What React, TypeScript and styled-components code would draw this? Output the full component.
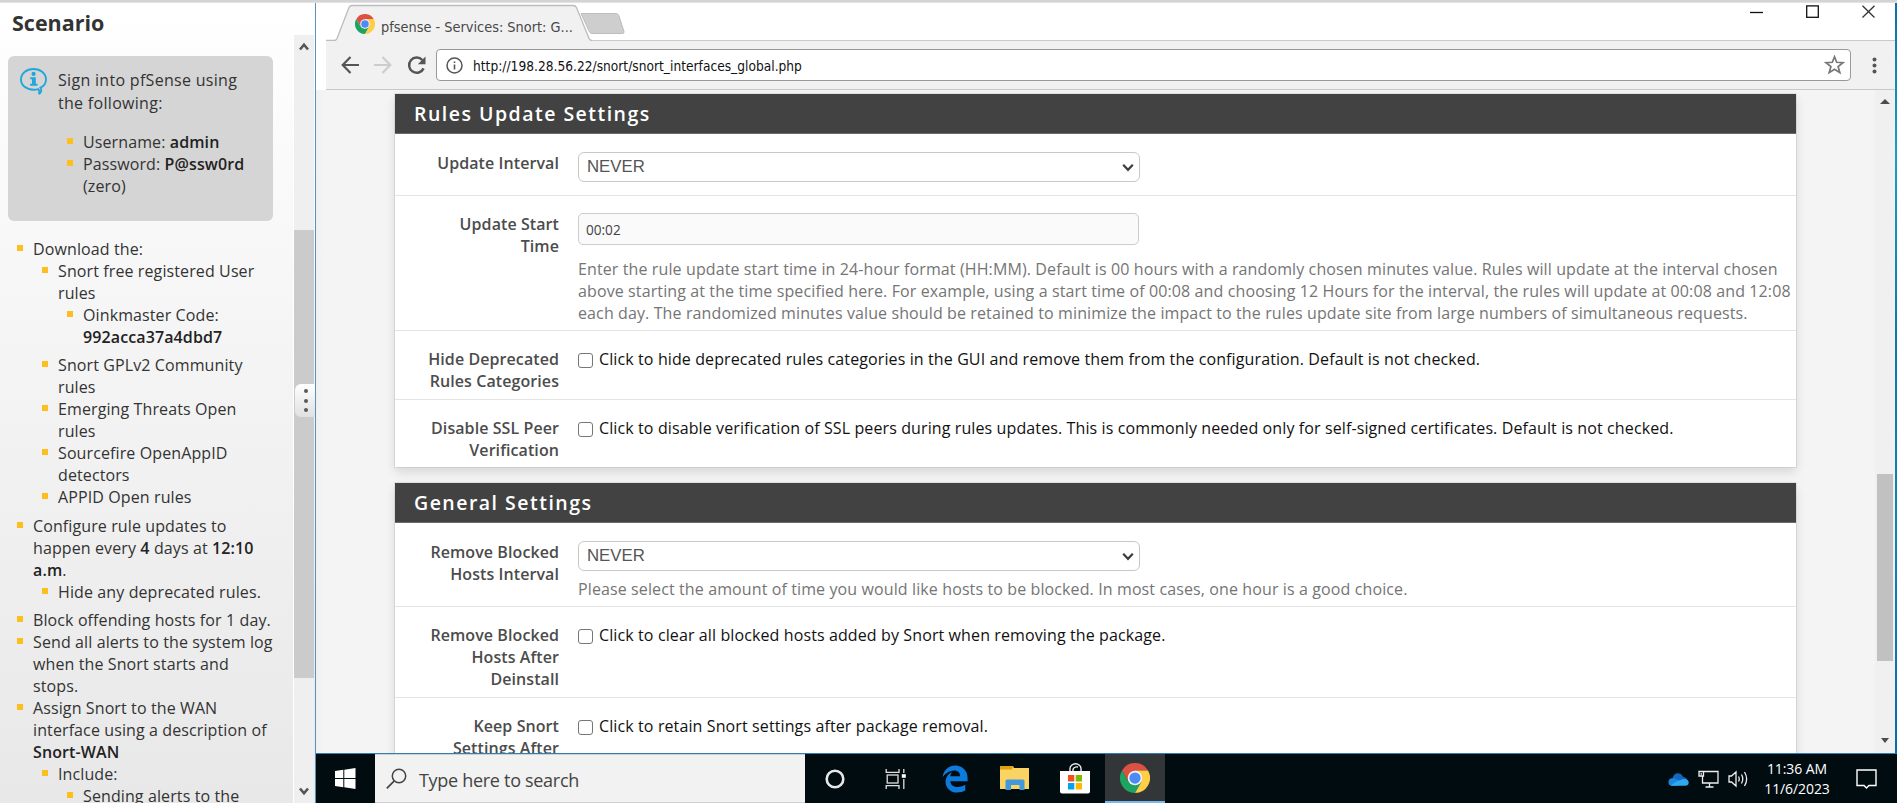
import React from "react";
import styled, { createGlobalStyle } from "styled-components";
import { FaEdgeLegacy } from "react-icons/fa";

const GlobalStyle = createGlobalStyle`
  *, *::before, *::after { box-sizing: border-box; }
  body { margin: 0; overflow: hidden; font-family: "Open Sans", "Noto Sans", sans-serif; }
`;

const Screen = styled.div`
  display: flex;
  flex-direction: column;
  width: 1897px;
  height: 803px;
  overflow: hidden;
  background: #fff;
`;
const TopStrip = styled.div`
  flex: none;
  height: 3px;
  background: linear-gradient(#d4d4d4 60%, #ececec);
`;
const Columns = styled.div`
  display: flex;
  flex: 1;
  min-height: 0;
`;

/* ---------- scenario sidebar ---------- */

const Sidebar = styled.aside`
  position: relative;
  display: flex;
  width: 315px;
  flex: none;
  overflow: hidden;
  background: linear-gradient(#fff, #f4f4f4 45%, #e8e8e8);
  color: #333;
`;
const ScenarioBody = styled.div`
  width: 293px;
  flex: none;
  font-size: 16px;
  line-height: 22px;
  letter-spacing: 0.11px;
  white-space: nowrap;

  strong { font-weight: 600; color: #222; }
`;
const ScenarioTitle = styled.h1`
  margin: 0;
  height: 53px;
  padding: 4px 0 0 12px;
  font-size: 21.5px;
  line-height: 32px;
  font-weight: 700;
  letter-spacing: 0;
`;
const InfoBox = styled.section`
  display: flex;
  width: 265px;
  height: 165px;
  margin-left: 8px;
  padding: 12px 0 0 12px;
  border-radius: 6px;
  background: #d5d5d5;
`;
const InfoText = styled.div`
  margin-left: 11px;
`;
const InfoLead = styled.p`
  margin: 1px 0 16px;
  line-height: 23px;
  letter-spacing: 0.3px;
`;
const BulletList = styled.ul<{ $indent: number; $gap?: number; $before?: number }>`
  list-style: none;
  margin: ${(p) => p.$before ?? 0}px 0 ${(p) => p.$gap ?? 0}px;
  padding: 0 0 0 ${(p) => p.$indent}px;
`;
const Bullet = styled.li`
  position: relative;

  &::before {
    content: "";
    position: absolute;
    left: -16px;
    top: 7px;
    width: 6px;
    height: 6px;
    background: #fdbe1e;
  }
`;
const SideScroll = styled.div`
  display: flex;
  flex-direction: column;
  width: 21px;
  height: 768px;
  margin-top: 32px;
  border-left: 1px solid #fff;
  background: #efefef;
`;
const SideArrow = styled.div`
  display: flex;
  align-items: center;
  justify-content: center;
  height: 23px;
`;
const SideThumb = styled.div`
  height: 448px;
  margin: 172px 0 auto;
  background: #cbcbcb;
`;
const SplitHandle = styled.div`
  position: absolute;
  left: 295px;
  top: 381px;
  width: 20px;
  height: 33px;
  display: flex;
  flex-direction: column;
  align-items: center;
  justify-content: space-between;
  padding: 5px 0 5px 2px;
  border-radius: 6px 0 0 6px;
  background: linear-gradient(#fff, #e0e0e0);
`;
const HandleDot = styled.i`
  width: 4px;
  height: 4px;
  border-radius: 50%;
  background: #5a5a5a;
`;

/* ---------- virtual desktop ---------- */

const Desktop = styled.main`
  display: flex;
  flex-direction: column;
  width: 1582px;
  border-left: 1px solid #5b92bd;
`;
const WindowRow = styled.div`
  display: flex;
  height: 750px;
  flex: none;
`;
const DesktopEdge = styled.div`
  width: 2px;
  background: linear-gradient(#0c6fa8, #16a0c4 20%, #0b77ac 45%, #0c84b4 70%, #0a6aa8);
`;
const Browser = styled.div`
  display: flex;
  flex-direction: column;
  width: 1579px;
  overflow: hidden;
  background: #fff;
`;
const TitleBar = styled.header`
  display: flex;
  justify-content: space-between;
  height: 38px;
  flex: none;
  margin-left: 10px;
  box-shadow: inset 0 -1px #c9c9c9;
`;
const TabStrip = styled.div`
  position: relative;
  width: 310px;
  height: 38px;
`;
const TabShape = styled.svg`
  display: block;
`;
const TabLabel = styled.div`
  position: absolute;
  left: 29px;
  top: 9px;
  display: flex;
  align-items: center;
  gap: 6px;
  height: 24px;
  font: 14.4px/24px "DejaVu Sans Condensed", "DejaVu Sans", sans-serif;
  font-stretch: condensed;
  color: #484848;
  white-space: nowrap;

  span { padding-top: 6px; }
`;
const WindowButtons = styled.div`
  display: flex;
  gap: 43px;
  padding: 2px 20px 0 0;
`;
const Toolbar = styled.nav`
  display: flex;
  align-items: center;
  height: 49px;
  flex: none;
  margin-left: 10px;
  padding: 0 18px 0 15px;
  border-bottom: 1px solid #c8c8c8;
  background: #f1f1f1;
`;
const NavIcons = styled.div`
  display: flex;
  align-items: center;
  width: 95px;
  gap: 15px;
`;
const AddressBar = styled.div`
  display: flex;
  align-items: center;
  width: 1415px;
  height: 32px;
  padding: 0 5px 0 9px;
  border: 1px solid #999;
  border-radius: 4px;
  background: #fff;
  font: 13.6px/30px "DejaVu Sans Condensed", "DejaVu Sans", sans-serif;
  font-stretch: condensed;
  color: #111;

  span { flex: 1; margin-left: 10px; padding-top: 2px; letter-spacing: 0.02px; }
`;
const Kebab = styled.svg`
  margin-left: auto;
`;
const Viewport = styled.div`
  display: flex;
  flex: 1;
  min-height: 0;
  background: linear-gradient(90deg, #efefef, #f4f4f4 6px);
`;
const PageContent = styled.div`
  width: 1559px;
  padding: 4px 0 0 79px;
  overflow: hidden;
`;
const PageScroll = styled.div`
  display: flex;
  flex-direction: column;
  align-items: center;
  width: 20px;
  background: #f0f0f0;
`;
const ScrollArrow = styled.i<{ $down?: boolean }>`
  margin-top: ${(p) => (p.$down ? "auto" : "9px")};
  margin-bottom: ${(p) => (p.$down ? "10px" : "0")};
  border: 5px solid transparent;
  border-width: ${(p) => (p.$down ? "5px 4px 0" : "0 5px 5px")};
  border-${(p) => (p.$down ? "top" : "bottom")}-color: #4c4c4c;
`;
const PageThumb = styled.div`
  width: 16px;
  height: 187px;
  margin-top: 370px;
  background: #c1c1c1;
`;

/* ---------- settings panels ---------- */

const Panel = styled.section`
  width: 1401px;
  margin-bottom: 16px;
  background: #fff;
  box-shadow: 0 0 0 1px rgba(0, 0, 0, 0.07), 0 5px 10px rgba(0, 0, 0, 0.12);
`;
const PanelHeader = styled.h2`
  margin: 0;
  height: 40px;
  padding-left: 19px;
  border-bottom: 1px solid #6d6a6a;
  background: #424242;
  color: #fff;
  font-size: 19.5px;
  line-height: 40px;
  font-weight: 600;
  letter-spacing: 1.48px;
`;
const FieldRow = styled.div<{ $top?: number; $bottom?: number }>`
  display: grid;
  grid-template-columns: 164px 1fr;
  column-gap: 19px;
  padding: ${(p) => p.$top ?? 17}px 0 ${(p) => p.$bottom ?? 7}px;
  font-size: 16px;
  line-height: 22px;

  &:not(:last-child) { border-bottom: 1px solid #e4e4e4; }
`;
const FieldLabel = styled.label`
  text-align: right;
  font-weight: 600;
  letter-spacing: 0.08px;
  color: #4c4c4c;
  white-space: nowrap;
`;
const SelectBox = styled.div`
  display: flex;
  align-items: center;
  justify-content: space-between;
  width: 562px;
  height: 30px;
  padding: 0 5px 0 8px;
  border: 1px solid #c8c8c8;
  border-radius: 6px;
  background: #fff;
  font: 16.8px/28px "Liberation Sans", Arial, sans-serif;
  color: #555;
`;
const TimeInput = styled.div`
  width: 561px;
  height: 32px;
  padding: 1px 7px 0;
  border: 1px solid #ccc;
  border-radius: 5px;
  background: #fafafa;
  font-size: 13.6px;
  line-height: 30px;
  color: #444;
`;
const HelpText = styled.p<{ $gap: number }>`
  margin: ${(p) => p.$gap}px 0 0;
  color: #757575;
  letter-spacing: 0.112px;
  white-space: nowrap;
`;
const CheckLine = styled.div`
  display: flex;
  align-items: flex-start;
  gap: 6px;
  color: #111;
  letter-spacing: 0.112px;
  white-space: nowrap;
`;
const CheckBox = styled.i`
  width: 15px;
  height: 15px;
  margin-top: 5px;
  border: 1px solid #767676;
  border-radius: 3px;
  background: #fff;
`;

/* ---------- taskbar ---------- */

const Taskbar = styled.footer`
  display: flex;
  height: 50px;
  flex: none;
  border-top: 1px solid #2d7fb5;
  background: #010c10;
`;
const TaskButton = styled.div<{ $active?: boolean; $start?: boolean }>`
  display: flex;
  align-items: center;
  justify-content: center;
  width: ${(p) => (p.$start ? 59 : 60)}px;
  height: 49px;
  background: ${(p) => (p.$active ? "#333638" : "transparent")};
  border-bottom: ${(p) => (p.$active ? "2px solid #76b9ed" : "0")};
`;
const SearchBox = styled.div`
  display: flex;
  align-items: center;
  width: 430px;
  height: 49px;
  padding-left: 11px;
  gap: 12px;
  border: 1px solid #d0d0d0;
  border-width: 1px 0;
  background: #f2f2f2;
  font-size: 18px;
  line-height: 40px;
  letter-spacing: -0.3px;
  color: #444;

  span { padding-top: 3px; }
`;
const Tray = styled.div`
  display: flex;
  align-items: center;
  margin-left: auto;
  padding-right: 20px;
`;
const TrayIcons = styled.div`
  display: flex;
  align-items: center;
  gap: 9px;
  padding-top: 1px;
`;
const Clock = styled.div`
  width: 66px;
  margin: 0 26px 0 15px;
  padding-top: 1px;
  text-align: center;
  font-size: 14px;
  line-height: 20px;
  letter-spacing: -0.08px;
  color: #fff;
`;

const ChromeLogo = ({ size }: { size: number }) => (
  <svg width={size} height={size} viewBox="0 0 48 48">
    <path d="M44.8 12A24 24 0 0 0 3.2 12L13.6 30 24 24V12Z" fill="#dd5144" />
    <path d="M3.2 12A24 24 0 0 0 24 48L34.4 30 24 24 13.6 30Z" fill="#1da362" />
    <path d="M24 48A24 24 0 0 0 44.8 12H24V24L34.4 30Z" fill="#ffcd46" />
    <circle cx="24" cy="24" r="11.6" fill="#f1f1f1" />
    <circle cx="24" cy="24" r="9" fill="#4c8bf5" />
  </svg>
);

const SideChevron = ({ up }: { up?: boolean }) => (
  <svg width="10" height="9" viewBox="0 0 10 9">
    <path d={up ? "M1 7.5 5 2.7 9 7.5" : "M1 1.5 5 6.3 9 1.5"} fill="none" stroke="#555" strokeWidth="2.6" />
  </svg>
);

const Select = ({ value }: { value: string }) => (
  <SelectBox>
    <span>{value}</span>
    <svg width="12" height="9" viewBox="0 0 12 9">
      <path d="M1.2 1.8 6 6.8 10.8 1.8" fill="none" stroke="#3d3d3d" strokeWidth="2.2" />
    </svg>
  </SelectBox>
);

const Check = ({ text }: { text: string }) => (
  <CheckLine>
    <CheckBox />
    <span>{text}</span>
  </CheckLine>
);

const ScenarioPane = () => (
  <Sidebar>
    <ScenarioBody>
      <ScenarioTitle>Scenario</ScenarioTitle>
      <InfoBox>
        <svg width="27" height="27" viewBox="0 0 27 27">
          <path
            d="M20.5 19.6C24 18 26 15 26 11.4 26 5.4 20.6 1 13.5 1S1 5.4 1 11.4s5.4 10.3 12.5 10.3c1.8 0 3.5-.2 4.8-.6 1.2 1.4 2 3.2.3 4.9 2.7-1.2 3.5-4.2 1.9-6.4Z"
            fill="none"
            stroke="#22a7d8"
            strokeWidth="1.9"
          />
          <circle cx="13.6" cy="5.9" r="2.1" fill="#22a7d8" />
          <path d="M10.2 9.200h5.600v6.500h1.700v2.100h-7.400v-2.100h1.900v-4.500h-1.800z" fill="#22a7d8" />
        </svg>
        <InfoText>
          <InfoLead>
            Sign into pfSense using
            <br />
            the following:
          </InfoLead>
          <BulletList $indent={25}>
            <Bullet>
              Username: <strong>admin</strong>
            </Bullet>
            <Bullet>
              Password: <strong>P@ssw0rd</strong>
              <br />
              (zero)
            </Bullet>
          </BulletList>
        </InfoText>
      </InfoBox>
      <BulletList $indent={33} $before={17}>
        <Bullet>
          Download the:
          <BulletList $indent={25} $gap={7}>
            <Bullet>
              Snort free registered User
              <br />
              rules
              <BulletList $indent={25} $gap={6}>
                <Bullet>
                  Oinkmaster Code:
                  <br />
                  <strong>992acca37a4dbd7</strong>
                </Bullet>
              </BulletList>
            </Bullet>
            <Bullet>
              Snort GPLv2 Community
              <br />
              rules
            </Bullet>
            <Bullet>
              Emerging Threats Open
              <br />
              rules
            </Bullet>
            <Bullet>
              Sourcefire OpenAppID
              <br />
              detectors
            </Bullet>
            <Bullet>APPID Open rules</Bullet>
          </BulletList>
        </Bullet>
        <Bullet>
          Configure rule updates to
          <br />
          happen every <strong>4</strong> days at <strong>12:10</strong>
          <br />
          <strong>a.m</strong>.
          <BulletList $indent={25} $gap={6}>
            <Bullet>Hide any deprecated rules.</Bullet>
          </BulletList>
        </Bullet>
        <Bullet>Block offending hosts for 1 day.</Bullet>
        <Bullet>
          Send all alerts to the system log
          <br />
          when the Snort starts and
          <br />
          stops.
        </Bullet>
        <Bullet>
          Assign Snort to the WAN
          <br />
          interface using a description of
          <br />
          <strong>Snort-WAN</strong>
          <BulletList $indent={25}>
            <Bullet>
              Include:
              <BulletList $indent={25}>
                <Bullet>Sending alerts to the</Bullet>
              </BulletList>
            </Bullet>
          </BulletList>
        </Bullet>
      </BulletList>
    </ScenarioBody>
    <SideScroll>
      <SideArrow>
        <SideChevron up />
      </SideArrow>
      <SideThumb />
      <SideArrow>
        <SideChevron />
      </SideArrow>
    </SideScroll>
    <SplitHandle>
      <HandleDot />
      <HandleDot />
      <HandleDot />
    </SplitHandle>
  </Sidebar>
);

const BrowserChrome = () => (
  <>
    <TitleBar>
      <TabStrip>
        <TabShape width="310" height="38" viewBox="0 0 310 38">
          <path d="M255 10.5H290.5Q292 10.5 293 13L298 28.5Q298.5 30.5 296 30.5H266Q264 30.5 263 28Z" fill="#cecece" stroke="#bdbdbd" />
          <path d="M0 37.5H8Q10 37.5 11 35.5L23 4.5Q24 2.5 26 2.5H247Q249.5 2.5 250.5 4.5L265 37.5V38H0Z" fill="#f1f1f1" />
          <path d="M0 37.5H8Q10 37.5 11 35.5L23 4.5Q24 2.5 26 2.5H247Q249.5 2.5 250.5 4.5L263 35.5Q264 37.5 266 37.5" fill="none" stroke="#bcbcbc" strokeWidth="1.3" />
        </TabShape>
        <TabLabel>
          <ChromeLogo size={20} />
          <span>pfsense - Services: Snort: G...</span>
        </TabLabel>
      </TabStrip>
      <WindowButtons>
        <svg width="13" height="13" viewBox="0 0 13 13">
          <path d="M0 7.5H13" stroke="#111" strokeWidth="1.3" />
        </svg>
        <svg width="13" height="13" viewBox="0 0 13 13">
          <rect x=".7" y=".9" width="11.6" height="11.4" fill="none" stroke="#111" strokeWidth="1.3" />
        </svg>
        <svg width="13" height="13" viewBox="0 0 13 13">
          <path d="M.5 .7 12.5 12.5M12.5 .7.5 12.5" stroke="#333" strokeWidth="1.3" />
        </svg>
      </WindowButtons>
    </TitleBar>
    <Toolbar>
      <NavIcons>
        <svg width="18" height="18" viewBox="0 0 18 18">
          <path d="M18 9H2M9.5 1 1.7 9l7.8 8" fill="none" stroke="#555" strokeWidth="2.2" />
        </svg>
        <svg width="18" height="18" viewBox="0 0 18 18">
          <path d="M0 9H16M8.5 1 16.3 9l-7.8 8" fill="none" stroke="#cdcdcd" strokeWidth="2.2" />
        </svg>
        <svg width="19" height="19" viewBox="0 0 19 19">
          <path d="M15.3 4A7.6 7.6 0 1 0 16.6 12.4" fill="none" stroke="#555" strokeWidth="2.5" />
          <path d="M18.5 .6V8.3H10.8Z" fill="#555" />
        </svg>
      </NavIcons>
      <AddressBar>
        <svg width="17" height="17" viewBox="0 0 17 17">
          <circle cx="8.5" cy="8.5" r="7.5" fill="none" stroke="#555" strokeWidth="1.5" />
          <path d="M8.5 7.5V12.5M8.5 4.5V6" stroke="#555" strokeWidth="1.6" />
        </svg>
        <span>http://198.28.56.22/snort/snort_interfaces_global.php</span>
        <svg width="21" height="20" viewBox="0 0 21 20">
          <path d="M10.5 1.8 12.7 7.3 19 7.7 14.1 11.6 15.8 17.7 10.5 14.3 5.2 17.7 6.9 11.6 2 7.7 8.3 7.3Z" fill="none" stroke="#777" strokeWidth="1.7" />
        </svg>
      </AddressBar>
      <Kebab width="5" height="17" viewBox="0 0 5 17">
        <circle cx="2.5" cy="2.5" r="2" fill="#555" />
        <circle cx="2.5" cy="8.5" r="2" fill="#555" />
        <circle cx="2.5" cy="14.5" r="2" fill="#555" />
      </Kebab>
    </Toolbar>
  </>
);

const SettingsPage = () => (
  <PageContent>
    <Panel>
      <PanelHeader>Rules Update Settings</PanelHeader>
      <FieldRow $top={18} $bottom={13}>
        <FieldLabel>Update Interval</FieldLabel>
        <Select value="NEVER" />
      </FieldRow>
      <FieldRow $bottom={6}>
        <FieldLabel>
          Update Start
          <br />
          Time
        </FieldLabel>
        <div>
          <TimeInput>00:02</TimeInput>
          <HelpText $gap={13}>
            Enter the rule update start time in 24-hour format (HH:MM). Default is 00 hours with a randomly chosen
            minutes value. Rules will update at the interval chosen
            <br />
            above starting at the time specified here. For example, using a start time of 00:08 and choosing 12 Hours
            for the interval, the rules will update at 00:08 and 12:08
            <br />
            each day. The randomized minutes value should be retained to minimize the impact to the rules update site
            from large numbers of simultaneous requests.
          </HelpText>
        </div>
      </FieldRow>
      <FieldRow>
        <FieldLabel>
          Hide Deprecated
          <br />
          Rules Categories
        </FieldLabel>
        <Check text="Click to hide deprecated rules categories in the GUI and remove them from the configuration. Default is not checked." />
      </FieldRow>
      <FieldRow $bottom={6}>
        <FieldLabel>
          Disable SSL Peer
          <br />
          Verification
        </FieldLabel>
        <Check text="Click to disable verification of SSL peers during rules updates. This is commonly needed only for self-signed certificates. Default is not checked." />
      </FieldRow>
    </Panel>
    <Panel>
      <PanelHeader>General Settings</PanelHeader>
      <FieldRow $top={18} $bottom={6}>
        <FieldLabel>
          Remove Blocked
          <br />
          Hosts Interval
        </FieldLabel>
        <div>
          <Select value="NEVER" />
          <HelpText $gap={7}>
            Please select the amount of time you would like hosts to be blocked. In most cases, one hour is a good
            choice.
          </HelpText>
        </div>
      </FieldRow>
      <FieldRow>
        <FieldLabel>
          Remove Blocked
          <br />
          Hosts After
          <br />
          Deinstall
        </FieldLabel>
        <Check text="Click to clear all blocked hosts added by Snort when removing the package." />
      </FieldRow>
      <FieldRow>
        <FieldLabel>
          Keep Snort
          <br />
          Settings After
        </FieldLabel>
        <Check text="Click to retain Snort settings after package removal." />
      </FieldRow>
    </Panel>
  </PageContent>
);

const WindowsTaskbar = () => (
  <Taskbar>
    <TaskButton $start>
      <svg width="21" height="21" viewBox="0 0 21 21">
        <path d="M0 3 8.3 1.8V10H0ZM9.3 1.7 20.5 0V10H9.3ZM0 11H8.3V19.2L0 18ZM9.3 11H20.5V21L9.3 19.3Z" fill="#fff" />
      </svg>
    </TaskButton>
    <SearchBox>
      <svg width="21" height="21" viewBox="0 0 21 21">
        <circle cx="13" cy="8" r="6.7" fill="none" stroke="#444" strokeWidth="1.5" />
        <path d="M8.3 12.8.8 20.3" stroke="#444" strokeWidth="1.7" />
      </svg>
      <span>Type here to search</span>
    </SearchBox>
    <TaskButton>
      <svg width="20" height="20" viewBox="0 0 20 20">
        <circle cx="10" cy="10" r="8.3" fill="none" stroke="#e8e8e8" strokeWidth="2.6" />
      </svg>
    </TaskButton>
    <TaskButton>
      <svg width="21" height="20" viewBox="0 0 21 20" fill="none" stroke="#e0e0e0" strokeWidth="1.3">
        <path d="M1.2 0V3.3H14V0M1.2 20V16.7H14V20M18.8 0V4M18.8 10V20" />
        <rect x="2.2" y="6" width="10.8" height="8" />
        <path d="M16.8 7H20.8" stroke="#fff" strokeWidth="3.6" />
      </svg>
    </TaskButton>
    <TaskButton>
      <FaEdgeLegacy size={28} color="#0b7bdc" />
    </TaskButton>
    <TaskButton>
      <svg width="31" height="25" viewBox="0 0 31 25">
        <path d="M0 0H13L14 2H29V23H0Z" fill="#fbd363" />
        <path d="M0 0H13L12 3.5H0Z" fill="#e0a10b" />
        <path d="M5.5 15Q5.5 13.500 7 13.500H23Q24.500 13.500 24.500 15V24H19.500V19H11V24H5.500Z" fill="#4199dc" />
      </svg>
    </TaskButton>
    <TaskButton>
      <svg width="30" height="31" viewBox="0 0 30 31">
        <path d="M10 9V5.500a5.500 4.700 0 0 1 11 0V9M13 9V6.500a4 3.500 0 0 1 5-2.500" fill="none" stroke="#eee" strokeWidth="1.4" />
        <path d="M0 8H30V28.500Q30 30.500 28 30.500H2Q0 30.500 0 28.500Z" fill="#fff" />
        <path d="M8 12H14.300V18.500H8Z" fill="#f25022" />
        <path d="M15.700 12H22V18.500H15.700Z" fill="#7fba00" />
        <path d="M8 20H14.300V26.500H8Z" fill="#00a4ef" />
        <path d="M15.700 20H22V26.500H15.700Z" fill="#ffb900" />
      </svg>
    </TaskButton>
    <TaskButton $active>
      <ChromeLogo size={30} />
    </TaskButton>
    <Tray>
      <TrayIcons>
        <svg width="21" height="13" viewBox="0 0 21 13">
          <path d="M5 7.500a5.300 5.300 0 0 1 10-3.800Q19.500 4.500 20 9L12 9Z" fill="#1168bd" />
          <path d="M4 12.800A3.700 3.700 0 0 1 4.500 5.300Q8 4.500 11 8L10 12.800Z" fill="#1a86dc" />
          <path d="M2.500 12.300 10 7.700 15.500 6Q20.500 6 20.700 9.500 20.500 12.800 17 12.800H4Z" fill="#31a8ee" />
        </svg>
        <svg width="21" height="18" viewBox="0 0 21 18" fill="none" stroke="#eee" strokeWidth="1.3">
          <path d="M6 1.500H20V13H4.500V6M11.500 13V16.800M7.500 17H15.500M1 1.500H5.500V6H1ZM2.500 4H4" />
        </svg>
        <svg width="21" height="18" viewBox="0 0 21 18" fill="none" stroke="#eee" strokeWidth="1.3">
          <path d="M1 6H3.500L8 2V16L3.500 12H1ZM10.500 6.500Q12 9 10.500 11.500M13.500 4.500Q16 9 13.500 13.500M16.500 2Q20.800 9 16.500 16" />
        </svg>
      </TrayIcons>
      <Clock>
        11:36 AM
        <br />
        11/6/2023
      </Clock>
      <svg width="21" height="20" viewBox="0 0 21 20">
        <path d="M1 1H20V16.500H13L10.500 19 8 16.500H1Z" fill="none" stroke="#fff" strokeWidth="1.4" />
      </svg>
    </Tray>
  </Taskbar>
);

export default function App() {
  return (
    <Screen>
      <GlobalStyle />
      <TopStrip />
      <Columns>
        <ScenarioPane />
        <Desktop>
          <WindowRow>
            <Browser>
              <BrowserChrome />
              <Viewport>
                <SettingsPage />
                <PageScroll>
                  <ScrollArrow />
                  <PageThumb />
                  <ScrollArrow $down />
                </PageScroll>
              </Viewport>
            </Browser>
            <DesktopEdge />
          </WindowRow>
          <WindowsTaskbar />
        </Desktop>
      </Columns>
    </Screen>
  );
}
